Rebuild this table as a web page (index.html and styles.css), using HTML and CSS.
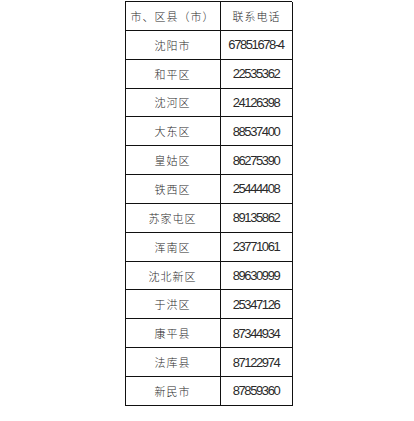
FILE: index.html
```html
<!DOCTYPE html>
<html lang="zh-CN">
<head>
<meta charset="utf-8">
<title>联系电话</title>
<link rel="stylesheet" href="styles.css">
</head>
<body>
<div class="table">
  <div class="cell name">市、区县（市）</div><div class="cell head">联系电话</div>
  <div class="cell name">沈阳市</div><div class="cell num">67851678-4</div>
  <div class="cell name">和平区</div><div class="cell num">22535362</div>
  <div class="cell name">沈河区</div><div class="cell num">24126398</div>
  <div class="cell name">大东区</div><div class="cell num">88537400</div>
  <div class="cell name">皇姑区</div><div class="cell num">86275390</div>
  <div class="cell name">铁西区</div><div class="cell num">25444408</div>
  <div class="cell name">苏家屯区</div><div class="cell num">89135862</div>
  <div class="cell name">浑南区</div><div class="cell num">23771061</div>
  <div class="cell name">沈北新区</div><div class="cell num">89630999</div>
  <div class="cell name">于洪区</div><div class="cell num">25347126</div>
  <div class="cell name">康平县</div><div class="cell num">87344934</div>
  <div class="cell name">法库县</div><div class="cell num">87122974</div>
  <div class="cell name">新民市</div><div class="cell num">87859360</div>
</div>
</body>
</html>
```
FILE: styles.css
```css
html, body {
  margin: 0;
  padding: 0;
  background: #ffffff;
}
body {
  padding-top: 1px;
}
.table {
  display: grid;
  grid-template-columns: 95px 72px;
  grid-template-rows: repeat(14, 28.857px);
  width: 167px;
  margin-left: 125px;
  border-left: 1px solid #111;
  border-top: 1px solid #111;
  box-sizing: border-box;
}
.cell {
  border-right: 1px solid #111;
  border-bottom: 1px solid #111;
  display: flex;
  align-items: center;
  justify-content: center;
  color: #2a2a2a;
  white-space: nowrap;
  overflow: hidden;
}
.name, .head {
  font-family: "Noto Sans CJK SC", "Noto Sans", sans-serif;
  font-size: 11px;
  letter-spacing: 1px;
  font-weight: 300;
}
.name {
  padding-right: 1px;
}
.num {
  font-family: "Liberation Sans", Arial, sans-serif;
  font-size: 13px;
  letter-spacing: -1.4px;
  padding-right: 1px;
}
```
